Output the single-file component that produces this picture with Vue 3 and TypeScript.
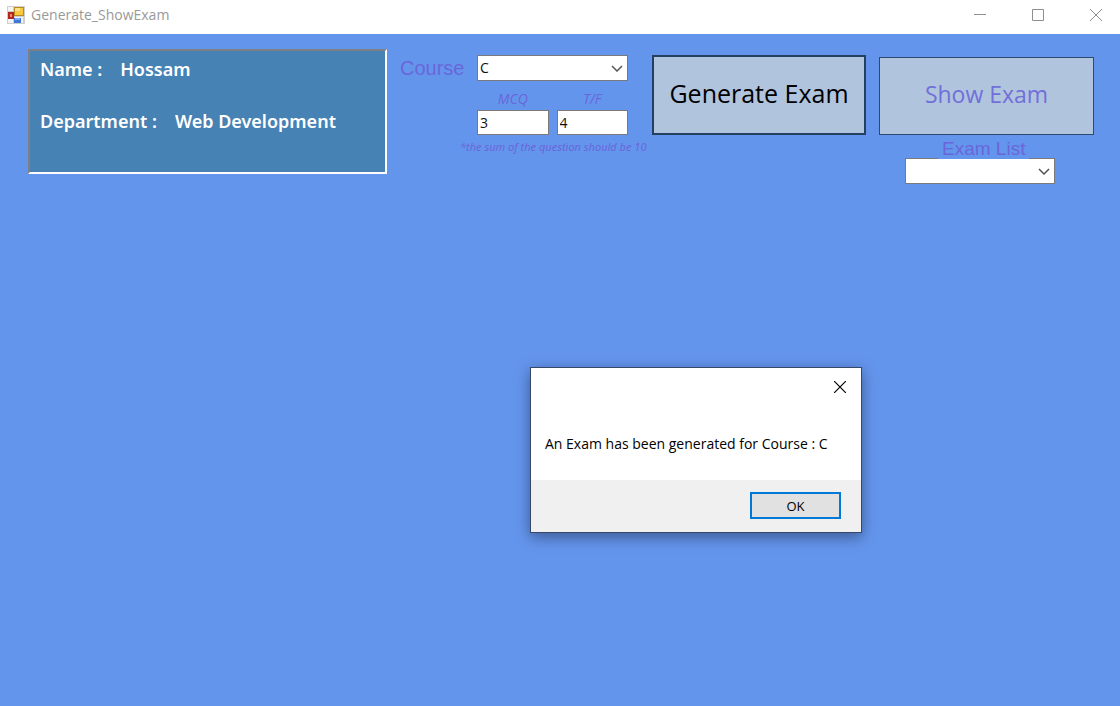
<script setup lang="ts">
import { ref } from 'vue'

const student = { name: 'Hossam', department: 'Web Development' }
const course = ref('C')
const mcqCount = ref('3')
const tfCount = ref('4')
const selectedExam = ref('')
const dialogOpen = ref(true)
const message = ref('An Exam has been generated for Course : C')

function generateExam() {
  message.value = `An Exam has been generated for Course : ${course.value}`
  dialogOpen.value = true
}
</script>

<template>
  <div class="window">
    <header class="titlebar">
      <svg class="app-icon" width="18" height="18" viewBox="0 0 18 18" aria-hidden="true">
        <rect x="0" y="0" width="18" height="18" fill="#cfcfcf" />
        <path d="M1 1h5v4H1zM1 13h5v4H1zM8 11h8v6H8z" fill="#f4f4f4" />
        <rect x="1" y="6" width="6" height="7" fill="#b3261c" />
        <rect x="3" y="8" width="2" height="3" fill="#ee8a7c" />
        <rect x="7" y="1" width="10" height="9" fill="#b98a1c" />
        <rect x="8" y="2" width="8" height="7" fill="#f8c93c" />
        <rect x="8" y="2" width="5" height="3" fill="#fde28a" />
        <rect x="7" y="12" width="7" height="5" fill="#3d77d8" />
        <rect x="8" y="12" width="5" height="2" fill="#7eacf2" />
      </svg>
      <h1 class="title">Generate_ShowExam</h1>
      <div class="controls">
        <button type="button" class="control" aria-label="Minimize">
          <svg width="12" height="12" viewBox="0 0 12 12"><path d="M0 5.5h12" stroke="#8f8f8f" /></svg>
        </button>
        <button type="button" class="control" aria-label="Maximize">
          <svg width="12" height="12" viewBox="0 0 12 12"><path d="M.5.5h11v11H.5z" fill="none" stroke="#8f8f8f" /></svg>
        </button>
        <button type="button" class="control" aria-label="Close">
          <svg width="12" height="12" viewBox="0 0 12 12"><path d="M0 0l12 12M12 0L0 12" stroke="#8f8f8f" /></svg>
        </button>
      </div>
    </header>

    <main class="form">
      <section class="info">
        <p class="info-row"><span>Name :</span><span>{{ student.name }}</span></p>
        <p class="info-row"><span>Department :</span><span>{{ student.department }}</span></p>
      </section>

      <section class="course">
        <label class="arial course-label" for="course">Course</label>
        <div class="combo">
          <select id="course" v-model="course">
            <option>C</option>
          </select>
          <svg class="chevron" width="12" height="7" viewBox="0 0 12 7"><path d="M1 1l5 5 5-5" fill="none" stroke="#555" stroke-width="1.5" /></svg>
        </div>
        <div class="counts">
          <div class="count">
            <label for="mcq">MCQ</label>
            <input id="mcq" v-model="mcqCount" type="text" />
          </div>
          <div class="count">
            <label for="tf">T/F</label>
            <input id="tf" v-model="tfCount" type="text" />
          </div>
        </div>
        <p class="note">*the sum of the question should be 10</p>
      </section>

      <button type="button" class="action primary" @click="generateExam">Generate Exam</button>

      <section class="show">
        <button type="button" class="action secondary">Show Exam</button>
        <div class="exam-field">
          <label class="arial exam-label" for="exam">Exam List</label>
          <div class="combo exam-combo">
            <select id="exam" v-model="selectedExam">
              <option value=""></option>
            </select>
            <svg class="chevron" width="12" height="7" viewBox="0 0 12 7"><path d="M1 1l5 5 5-5" fill="none" stroke="#555" stroke-width="1.5" /></svg>
          </div>
        </div>
      </section>
    </main>

    <div v-if="dialogOpen" class="dialog" role="alertdialog" aria-describedby="message">
      <button type="button" class="dialog-close" aria-label="Close" @click="dialogOpen = false">
        <svg width="12" height="12" viewBox="0 0 12 12"><path d="M0 0l12 12M12 0L0 12" stroke="#000" stroke-width="1.2" /></svg>
      </button>
      <p id="message" class="message">{{ message }}</p>
      <footer class="dialog-footer">
        <button type="button" class="ok" @click="dialogOpen = false">OK</button>
      </footer>
    </div>
  </div>
</template>

<style>
body {
  margin: 0;
}
</style>

<style scoped>
* {
  box-sizing: border-box;
}
.window {
  position: relative;
  display: flex;
  flex-direction: column;
  min-height: 100vh;
  background: #6495ed;
  font-family: 'Open Sans', 'Noto Sans', sans-serif;
  color: #6a66d9;
}
button,
input,
select {
  font-family: inherit;
  border-radius: 0;
}
p,
h1 {
  margin: 0;
}
.titlebar {
  display: flex;
  align-items: center;
  height: 34px;
  padding: 0 0 4px 7px;
  background: #fff;
}
.app-icon {
  margin-right: 6px;
}
.title {
  font-size: 14px;
  line-height: 20px;
  font-weight: 400;
  color: #999;
}
.controls {
  display: flex;
  margin-left: auto;
}
.control {
  display: flex;
  align-items: center;
  justify-content: flex-end;
  width: 58px;
  height: 30px;
  padding: 0 18px 0 0;
  border: 0;
  background: transparent;
}
.form {
  display: grid;
  grid-template-columns: 359fr 239fr 214fr 215fr;
  column-gap: 13px;
  align-items: start;
  padding: 15px 26px 0 28px;
}
.info {
  display: flex;
  flex-direction: column;
  gap: 28px;
  height: 125px;
  padding: 6px 10px;
  background: #4682b4;
  border: 2px solid;
  border-color: #7c8084 #fff #fff #7c8084;
  color: #fff;
  font-family: 'Noto Sans', 'Open Sans', sans-serif;
  font-size: 18px;
  line-height: 24px;
  font-weight: 600;
}
.info-row {
  display: flex;
  gap: 18px;
  white-space: nowrap;
}
.course {
  display: grid;
  grid-template-columns: 77px 151px;
  padding-top: 6px;
}
.arial {
  font-family: 'Liberation Sans', Arial, sans-serif;
}
.course-label {
  font-size: 20px;
  line-height: 26px;
}
.combo {
  position: relative;
  height: 26px;
}
.combo select {
  appearance: none;
  display: block;
  width: 100%;
  height: 100%;
  padding: 0 24px 2px 2px;
  border: 1px solid #7a7a7a;
  background: #fff;
  color: #111;
  font-size: 14px;
}
.chevron {
  position: absolute;
  right: 5px;
  top: 10px;
  pointer-events: none;
}
.counts {
  grid-column: 2;
  display: flex;
  gap: 8px;
  padding-top: 7px;
}
.count {
  flex: 1;
  display: flex;
  flex-direction: column;
  align-items: center;
}
.count label {
  font-size: 14px;
  line-height: 22px;
  font-style: italic;
}
.count input {
  width: 100%;
  height: 25px;
  padding: 0 2px;
  border: 1px solid #7a7a7a;
  background: #fff;
  color: #111;
  font-size: 14px;
}
.note {
  grid-column: 1 / -1;
  padding: 4px 0 0 60px;
  font-family: 'Noto Sans', 'Open Sans', sans-serif;
  font-size: 11px;
  line-height: 16px;
  font-style: italic;
  white-space: nowrap;
}
.action {
  width: 100%;
  padding: 0 0 4px;
  background: #b0c4de;
}
.primary {
  height: 80px;
  margin-top: 6px;
  border: 2px solid #243f60;
  color: #000;
  font-size: 25px;
}
.show {
  display: flex;
  flex-direction: column;
  padding-top: 8px;
}
.secondary {
  height: 78px;
  border: 1px solid #2c4a70;
  color: #7070d8;
  font-size: 23px;
}
.exam-field {
  display: flex;
  flex-direction: column;
  align-items: flex-start;
  width: 150px;
  margin: 3px 0 0 26px;
}
.exam-label {
  position: relative;
  z-index: 1;
  margin-left: 33px;
  padding: 0 4px;
  background: #6495ed;
  font-size: 19px;
  line-height: 21px;
  white-space: nowrap;
}
.exam-combo {
  width: 100%;
  margin-top: -1px;
}
.dialog {
  position: absolute;
  left: 530px;
  top: 367px;
  display: flex;
  flex-direction: column;
  width: 332px;
  border: 1px solid #35486b;
  background: #fff;
  box-shadow: 0 4px 14px rgba(0, 0, 0, 0.4);
  color: #000;
}
.dialog-close {
  align-self: flex-end;
  display: flex;
  align-items: center;
  justify-content: center;
  width: 42px;
  height: 38px;
  padding: 0;
  border: 0;
  background: transparent;
}
.message {
  padding: 28px 14px 26px;
  font-size: 14px;
  line-height: 20px;
  white-space: nowrap;
}
.dialog-footer {
  display: flex;
  justify-content: flex-end;
  padding: 12px 20px 13px;
  background: #f0f0f0;
}
.ok {
  width: 91px;
  height: 27px;
  padding: 0;
  border: 2px solid #0078d7;
  background: #e1e1e1;
  color: #000;
  font-size: 13px;
}
</style>
